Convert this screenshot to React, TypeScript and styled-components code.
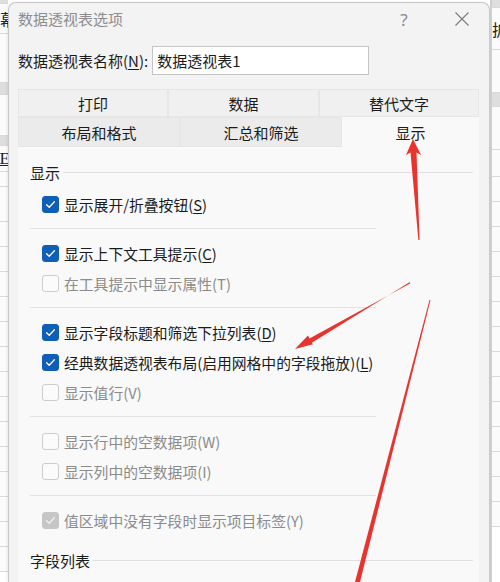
import React from "react";
import styled, { createGlobalStyle } from "styled-components";

const Global = createGlobalStyle`
  html, body { margin: 0; padding: 0; background: #ffffff; }
  body { font-family: "Noto Sans CJK SC", "Noto Sans", sans-serif; }
  * { box-sizing: border-box; }
`;

const Page = styled.div`
  position: relative;
  width: 500px;
  height: 582px;
  overflow: hidden;
  display: flex;
  flex-direction: row;
  background: #ffffff;
`;

/* ---------- Excel background strips ---------- */
const Strip = styled.div<{ $w: number; $side: "left" | "right" }>`
  width: ${(p) => p.$w}px;
  flex: none;
  display: flex;
  flex-direction: column;
  overflow: hidden;
  background: #ffffff;
  ${(p) => (p.$side === "right" ? "border-left: 2px solid #cfcfcf;" : "")}
`;

const Cell = styled.div<{ $h: number; $shade?: boolean; $align?: "left" | "right" }>`
  height: ${(p) => p.$h}px;
  flex: none;
  display: flex;
  align-items: center;
  justify-content: ${(p) => (p.$align === "left" ? "flex-start" : "flex-end")};
  background: ${(p) => (p.$shade ? "#dedede" : "#fbfbfb")};
  border-bottom: 1px solid #d9d9d9;
  font-size: 16px;
  color: #222;
  white-space: nowrap;
  overflow: hidden;
`;

const PartialChar = styled.span<{ $shift: number }>`
  margin-right: ${(p) => p.$shift}px;
`;

const SerifChar = styled.span`
  font-family: "Liberation Serif", serif;
  font-size: 17px;
  text-decoration: underline;
  margin-right: -2px;
`;

/* ---------- Dialog ---------- */
const Dialog = styled.div`
  width: 482px;
  flex: none;
  margin-top: 2px;
  display: flex;
  flex-direction: column;
  background: #f3f3f3;
  border: 1px solid #c8c8c8;
  border-bottom: none;
  border-radius: 8px 8px 0 0;
  box-shadow: -1px 0 3px rgba(0, 0, 0, 0.08);
`;

const TitleBar = styled.div`
  height: 32px;
  display: flex;
  align-items: center;
  padding-left: 9px;
  padding-right: 4px;
`;

const Title = styled.div`
  flex: 1;
  font-size: 15px;
  line-height: 20px;
  color: #8d8d8d;
`;

const TitleButton = styled.div`
  width: 46px;
  height: 32px;
  display: flex;
  align-items: center;
  justify-content: center;
  color: #8a8a8a;
  font-size: 17px;
  font-family: "Noto Sans", sans-serif;
`;

const TitleButtons = styled.div`
  display: flex;
  gap: 12px;
`;

const NameRow = styled.div`
  margin-top: 11px;
  height: 29px;
  display: flex;
  align-items: center;
  gap: 4px;
  padding-left: 9px;
`;

const Label = styled.span`
  font-size: 15px;
  line-height: 20px;
  color: #1b1b1b;
`;

const NameInput = styled.div`
  width: 217px;
  height: 29px;
  background: #ffffff;
  border: 1px solid #c4c4c4;
  display: flex;
  align-items: center;
  padding-left: 4px;
  font-size: 15px;
  color: #1b1b1b;
`;

const Tabs = styled.div`
  margin: 14px 10px 0 9px;
  display: flex;
  flex-direction: column;
`;

const TabRow = styled.div<{ $cols: string; $h: number }>`
  display: grid;
  grid-template-columns: ${(p) => p.$cols};
  height: ${(p) => p.$h}px;
`;

const Tab = styled.div<{ $active?: boolean; $dark?: boolean }>`
  display: flex;
  align-items: center;
  justify-content: center;
  font-size: 15px;
  color: #1b1b1b;
  background: ${(p) => (p.$active ? "#f9f9f9" : p.$dark ? "#ebebeb" : "#f0f0f0")};
  border: 1px solid ${(p) => (p.$active ? "#f9f9f9" : "#e6e6e6")};
  border-bottom: ${(p) => (p.$active ? "none" : "1px solid #e6e6e6")};
`;

const Panel = styled.div`
  flex: 1;
  margin: 0 10px 0 9px;
  background: #f9f9f9;
  padding: 10px 6px 0 12px;
  display: flex;
  flex-direction: column;
`;

const GroupHeader = styled.div<{ $gap?: number }>`
  height: 30px;
  margin-top: ${(p) => p.$gap ?? 0}px;
  display: flex;
  align-items: center;
  font-size: 15px;
  color: #1b1b1b;
`;

const HeaderLine = styled.div`
  flex: 1;
  height: 1px;
  margin-left: 3px;
  background: #e0e0e0;
`;

const Rows = styled.div`
  margin-top: 2px;
  display: flex;
  flex-direction: column;
`;

const Separator = styled.div`
  width: 346px;
  height: 1px;
  margin: 9px 0;
  background: #e2e2e2;
`;

const Row = styled.div<{ $disabled?: boolean }>`
  height: 30px;
  display: flex;
  align-items: center;
  gap: 5px;
  padding-left: 12px;
  font-size: 14.8px;
  color: ${(p) => (p.$disabled ? "#8b8b8b" : "#1b1b1b")};
  white-space: nowrap;
`;

const Box = styled.div<{ $checked?: boolean; $disabled?: boolean }>`
  width: 17px;
  height: 17px;
  flex: none;
  border-radius: 3px;
  display: flex;
  align-items: center;
  justify-content: center;
  background: ${(p) =>
    p.$checked ? (p.$disabled ? "#c6c6c6" : "#0f5eb7") : "#fbfbfb"};
  border: 1px solid
    ${(p) => (p.$checked ? (p.$disabled ? "#c6c6c6" : "#0f5eb7") : "#cdcdcd")};
`;

const Key = styled.span<{ $u: boolean }>`
  text-decoration: ${(p) => (p.$u ? "underline" : "none")};
  text-underline-offset: 2px;
`;

const Overlay = styled.svg`
  position: absolute;
  left: 0;
  top: 0;
  pointer-events: none;
`;

type Item = { text: string; k: string; checked?: boolean; disabled?: boolean };

const groups: Item[][] = [
  [{ text: "显示展开/折叠按钮", k: "S", checked: true }],
  [
    { text: "显示上下文工具提示", k: "C", checked: true },
    { text: "在工具提示中显示属性", k: "T", disabled: true },
  ],
  [
    { text: "显示字段标题和筛选下拉列表", k: "D", checked: true },
    { text: "经典数据透视表布局(启用网格中的字段拖放)", k: "L", checked: true },
    { text: "显示值行", k: "V", disabled: true },
  ],
  [
    { text: "显示行中的空数据项", k: "W", disabled: true },
    { text: "显示列中的空数据项", k: "I", disabled: true },
  ],
  [{ text: "值区域中没有字段时显示项目标签", k: "Y", checked: true, disabled: true }],
];

const Check = ({ disabled }: { disabled?: boolean }) => (
  <svg width="13" height="13" viewBox="0 0 13 13">
    <path
      d="M2.6 6.8 L5.2 9.3 L10.4 3.8"
      fill="none"
      stroke={disabled ? "#efefef" : "#ffffff"}
      strokeWidth="1.3"
      strokeLinecap="round"
      strokeLinejoin="round"
    />
  </svg>
);

const CheckRow = ({ item }: { item: Item }) => (
  <Row $disabled={item.disabled}>
    <Box $checked={item.checked} $disabled={item.disabled}>
      {item.checked && <Check disabled={item.disabled} />}
    </Box>
    <span>
      {item.text}(<Key $u={!item.disabled}>{item.k}</Key>)
    </span>
  </Row>
);

type StripCell = { h: number; shade?: boolean; text?: string; e?: boolean };

const leftCells: StripCell[] = [
  { h: 4, shade: true },
  { h: 30, text: "幕" },
  { h: 49 },
  { h: 12, shade: true },
  { h: 41 },
  { h: 10, shade: true },
  { h: 26, e: true },
  { h: 15 },
  { h: 35 },
  ...Array.from({ length: 14 }, () => ({ h: 25 })),
];

const rightCells: StripCell[] = [
  { h: 8, shade: true },
  { h: 42, text: "扩" },
  { h: 43 },
  { h: 14, shade: true },
  { h: 43 },
  { h: 27 },
  ...Array.from({ length: 14 }, () => ({ h: 25 })),
];

export default function App() {
  return (
    <>
      <Global />
      <Page>
        <Strip $w={8} $side="left">
          {leftCells.map((c, i) => (
            <Cell key={i} $h={c.h} $shade={c.shade} $align="right">
              {c.text ? <PartialChar $shift={-8}>{c.text}</PartialChar> : null}
              {c.e ? <SerifChar>E</SerifChar> : null}
            </Cell>
          ))}
        </Strip>

        <Dialog>
          <TitleBar>
            <Title>数据透视表选项</Title>
            <TitleButtons>
              <TitleButton>?</TitleButton>
              <TitleButton>
                <svg width="16" height="16" viewBox="0 0 16 16">
                  <path d="M1.5 1.5 L14.5 14.5 M14.5 1.5 L1.5 14.5" stroke="#7a7a7a" strokeWidth="1.1" />
                </svg>
              </TitleButton>
            </TitleButtons>
          </TitleBar>

          <NameRow>
            <Label>
              数据透视表名称(<Key $u>N</Key>):
            </Label>
            <NameInput>数据透视表1</NameInput>
          </NameRow>

          <Tabs>
            <TabRow $cols="150px 151px 160px" $h={28}>
              <Tab>打印</Tab>
              <Tab>数据</Tab>
              <Tab>替代文字</Tab>
            </TabRow>
            <TabRow $cols="162px 162px 137px" $h={30}>
              <Tab $dark>布局和格式</Tab>
              <Tab $dark>汇总和筛选</Tab>
              <Tab $active>显示</Tab>
            </TabRow>
          </Tabs>

          <Panel>
            <GroupHeader>
              显示
              <HeaderLine />
            </GroupHeader>
            <Rows>
              {groups.map((g, gi) => (
                <React.Fragment key={gi}>
                  {gi > 0 && <Separator />}
                  {g.map((item) => (
                    <CheckRow key={item.k} item={item} />
                  ))}
                </React.Fragment>
              ))}
            </Rows>
            <GroupHeader $gap={10}>
              字段列表
              <HeaderLine />
            </GroupHeader>
          </Panel>
        </Dialog>

        <Strip $w={10} $side="right">
          {rightCells.map((c, i) => (
            <Cell key={i} $h={c.h} $shade={c.shade} $align="left">
              {c.text ? <PartialChar $shift={0}>{c.text}</PartialChar> : null}
            </Cell>
          ))}
        </Strip>

        <Overlay width="500" height="582" viewBox="0 0 500 582">
          <g fill="#e8332f">
            {/* arrow 1: pointing up to the 显示 tab */}
            <polygon points="413,139 421,155 416.5,152.5 419.6,240 418.4,240 410.5,152.5 406,155" />
            {/* arrow 2: pointing to the classic layout row */}
            <polygon points="295,349 308,335.6 309.5,338.5 410.5,283.3 409.5,282.3 311.8,342.8 313,344.2" />
            {/* line 3 */}
            <polygon points="429.5,300 430.5,300 360,582 355,582" />
          </g>
        </Overlay>
      </Page>
    </>
  );
}
